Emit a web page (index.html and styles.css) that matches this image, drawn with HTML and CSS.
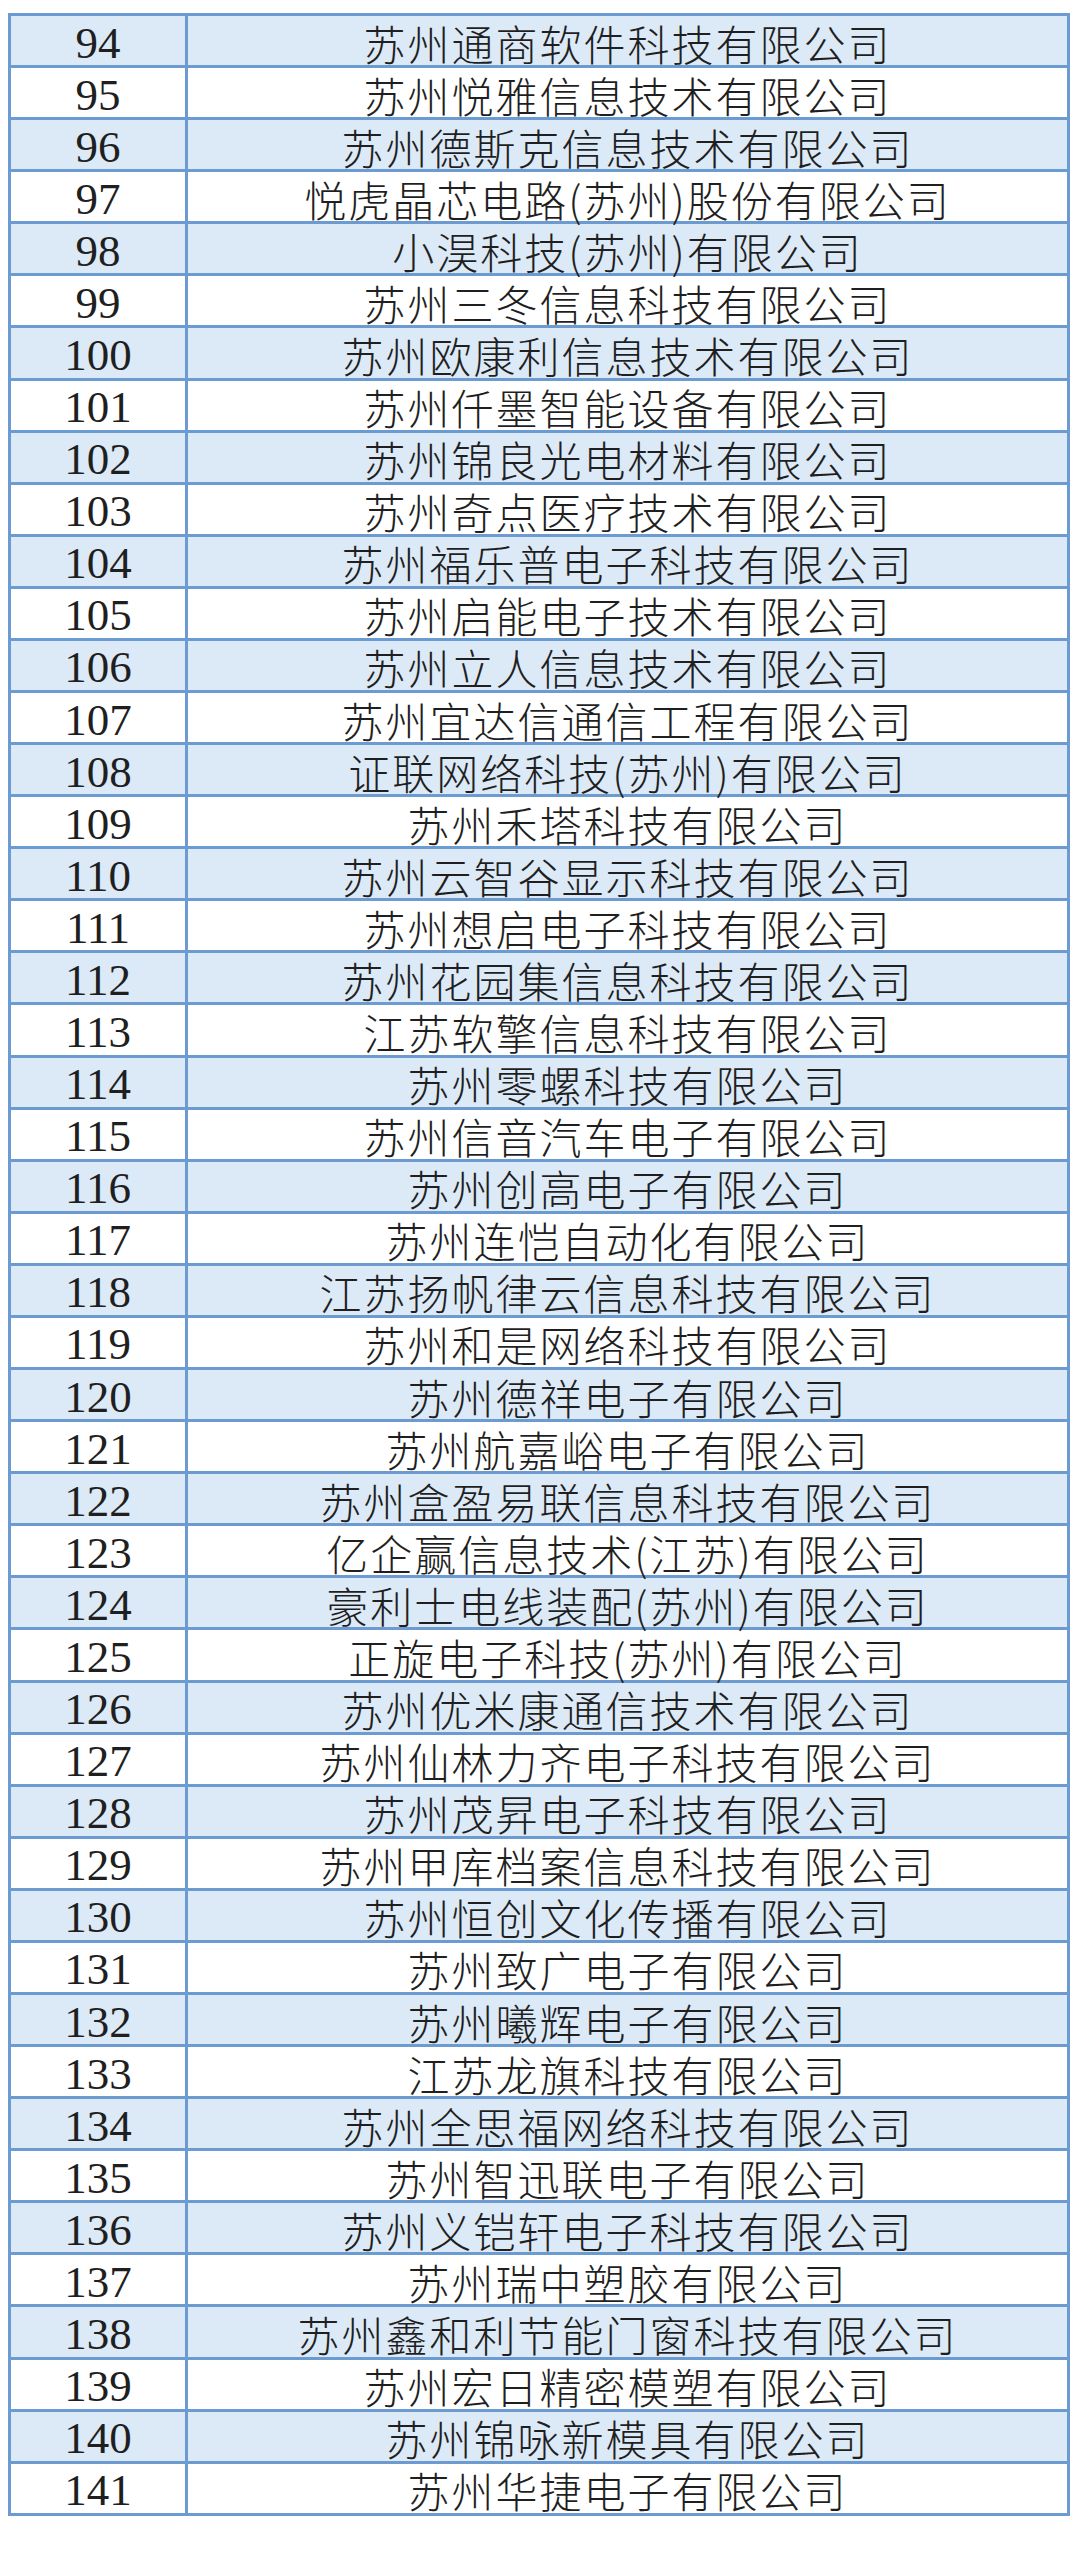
FILE: index.html
```html
<!DOCTYPE html>
<html lang="zh-CN">
<head>
<meta charset="utf-8">
<title>企业名单</title>
<link rel="stylesheet" href="styles.css">
</head>
<body>
<table class="list">
<colgroup><col class="c-num"><col class="c-name"></colgroup>
<tbody>
<tr class="alt"><td class="num">94</td><td class="name">苏州通商软件科技有限公司</td></tr>
<tr><td class="num">95</td><td class="name">苏州悦雅信息技术有限公司</td></tr>
<tr class="alt"><td class="num">96</td><td class="name">苏州德斯克信息技术有限公司</td></tr>
<tr><td class="num">97</td><td class="name">悦虎晶芯电路(苏州)股份有限公司</td></tr>
<tr class="alt"><td class="num">98</td><td class="name">小淏科技(苏州)有限公司</td></tr>
<tr><td class="num">99</td><td class="name">苏州三冬信息科技有限公司</td></tr>
<tr class="alt"><td class="num">100</td><td class="name">苏州欧康利信息技术有限公司</td></tr>
<tr><td class="num">101</td><td class="name">苏州仟墨智能设备有限公司</td></tr>
<tr class="alt"><td class="num">102</td><td class="name">苏州锦良光电材料有限公司</td></tr>
<tr><td class="num">103</td><td class="name">苏州奇点医疗技术有限公司</td></tr>
<tr class="alt"><td class="num">104</td><td class="name">苏州福乐普电子科技有限公司</td></tr>
<tr><td class="num">105</td><td class="name">苏州启能电子技术有限公司</td></tr>
<tr class="alt"><td class="num">106</td><td class="name">苏州立人信息技术有限公司</td></tr>
<tr><td class="num">107</td><td class="name">苏州宜达信通信工程有限公司</td></tr>
<tr class="alt"><td class="num">108</td><td class="name">证联网络科技(苏州)有限公司</td></tr>
<tr><td class="num">109</td><td class="name">苏州禾塔科技有限公司</td></tr>
<tr class="alt"><td class="num">110</td><td class="name">苏州云智谷显示科技有限公司</td></tr>
<tr><td class="num">111</td><td class="name">苏州想启电子科技有限公司</td></tr>
<tr class="alt"><td class="num">112</td><td class="name">苏州花园集信息科技有限公司</td></tr>
<tr><td class="num">113</td><td class="name">江苏软擎信息科技有限公司</td></tr>
<tr class="alt"><td class="num">114</td><td class="name">苏州零螺科技有限公司</td></tr>
<tr><td class="num">115</td><td class="name">苏州信音汽车电子有限公司</td></tr>
<tr class="alt"><td class="num">116</td><td class="name">苏州创高电子有限公司</td></tr>
<tr><td class="num">117</td><td class="name">苏州连恺自动化有限公司</td></tr>
<tr class="alt"><td class="num">118</td><td class="name">江苏扬帆律云信息科技有限公司</td></tr>
<tr><td class="num">119</td><td class="name">苏州和是网络科技有限公司</td></tr>
<tr class="alt"><td class="num">120</td><td class="name">苏州德祥电子有限公司</td></tr>
<tr><td class="num">121</td><td class="name">苏州航嘉峪电子有限公司</td></tr>
<tr class="alt"><td class="num">122</td><td class="name">苏州盒盈易联信息科技有限公司</td></tr>
<tr><td class="num">123</td><td class="name">亿企赢信息技术(江苏)有限公司</td></tr>
<tr class="alt"><td class="num">124</td><td class="name">豪利士电线装配(苏州)有限公司</td></tr>
<tr><td class="num">125</td><td class="name">正旋电子科技(苏州)有限公司</td></tr>
<tr class="alt"><td class="num">126</td><td class="name">苏州优米康通信技术有限公司</td></tr>
<tr><td class="num">127</td><td class="name">苏州仙林力齐电子科技有限公司</td></tr>
<tr class="alt"><td class="num">128</td><td class="name">苏州茂昇电子科技有限公司</td></tr>
<tr><td class="num">129</td><td class="name">苏州甲库档案信息科技有限公司</td></tr>
<tr class="alt"><td class="num">130</td><td class="name">苏州恒创文化传播有限公司</td></tr>
<tr><td class="num">131</td><td class="name">苏州致广电子有限公司</td></tr>
<tr class="alt"><td class="num">132</td><td class="name">苏州曦辉电子有限公司</td></tr>
<tr><td class="num">133</td><td class="name">江苏龙旗科技有限公司</td></tr>
<tr class="alt"><td class="num">134</td><td class="name">苏州全思福网络科技有限公司</td></tr>
<tr><td class="num">135</td><td class="name">苏州智迅联电子有限公司</td></tr>
<tr class="alt"><td class="num">136</td><td class="name">苏州义铠轩电子科技有限公司</td></tr>
<tr><td class="num">137</td><td class="name">苏州瑞中塑胶有限公司</td></tr>
<tr class="alt"><td class="num">138</td><td class="name">苏州鑫和利节能门窗科技有限公司</td></tr>
<tr><td class="num">139</td><td class="name">苏州宏日精密模塑有限公司</td></tr>
<tr class="alt"><td class="num">140</td><td class="name">苏州锦咏新模具有限公司</td></tr>
<tr><td class="num">141</td><td class="name">苏州华捷电子有限公司</td></tr>
</tbody>
</table>
</body>
</html>
```

FILE: styles.css
```css
html, body {
  margin: 0;
  padding: 0;
  background: #ffffff;
}

body {
  padding: 13px 0 0 8px;
}

.list {
  border-collapse: collapse;
  width: 1059px;
  table-layout: fixed;
  color: #1f1f1f;
}

.c-num { width: 177px; }
.c-name { width: 882px; }

.list tr {
  height: 52.08px;
}

.list tr.alt {
  background: #dce9f6;
}

.list td {
  border: 3px solid #6b9bd0;
  padding: 4px 0 0 0;
  text-align: center;
  vertical-align: middle;
  white-space: nowrap;
  line-height: 42px;
}

.num {
  font-family: "Liberation Serif", "DejaVu Serif", serif;
  font-size: 45px;
}

.name {
  font-family: "Noto Sans CJK SC", "Noto Sans", sans-serif;
  font-weight: 300;
  font-size: 42px;
  letter-spacing: 2px;
  padding-left: 2px;
}
```
